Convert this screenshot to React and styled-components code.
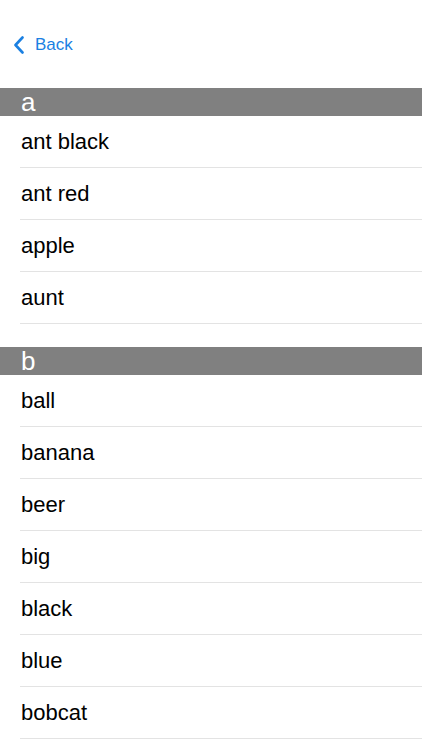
import styled, { createGlobalStyle } from 'styled-components';

const sections = [
  { letter: 'a', words: ['ant black', 'ant red', 'apple', 'aunt'] },
  { letter: 'b', words: ['ball', 'banana', 'beer', 'big', 'black', 'blue', 'bobcat'] },
];

const GlobalStyle = createGlobalStyle`
  body {
    margin: 0;
    background: #ffffff;
    font-family: "Liberation Sans", Arial, sans-serif;
  }
`;

const Screen = styled.div`
  width: 422px;
  background: #ffffff;
`;

const NavBar = styled.header`
  height: 88px;
  display: flex;
  align-items: center;
  padding: 1px 0 0 13px;
  box-sizing: border-box;
`;

const BackButton = styled.button`
  display: flex;
  align-items: center;
  gap: 10px;
  border: 0;
  background: none;
  padding: 0;
  color: #1b80e2;
  font-family: inherit;
  font-size: 17px;
  cursor: pointer;
`;

const Section = styled.section`
  margin-bottom: ${({ $last }) => ($last ? 0 : '23px')};
`;

const SectionHeader = styled.div`
  height: 28px;
  background: #808080;
  color: #ffffff;
  font-size: 26px;
  line-height: 28px;
  padding-left: 21px;
  overflow: hidden;
`;

const Row = styled.div`
  height: 51px;
  display: flex;
  align-items: center;
  margin-left: 20px;
  padding-left: 1px;
  border-bottom: 1px solid #e3e3e3;
  color: #000000;
  font-size: 22px;
`;

function Chevron() {
  return (
    <svg width="12" height="18" viewBox="0 0 12 18">
      <path d="M9.5 1.5 L2.5 9 L9.5 16.5" fill="none" stroke="currentColor" strokeWidth="2.6" strokeLinecap="round" strokeLinejoin="round" />
    </svg>
  );
}

export default function App() {
  return (
    <Screen>
      <GlobalStyle />
      <NavBar>
        <BackButton>
          <Chevron />
          Back
        </BackButton>
      </NavBar>

      {sections.map((section, index) => (
        <Section key={section.letter} $last={index === sections.length - 1}>
          <SectionHeader>{section.letter}</SectionHeader>
          {section.words.map((word) => (
            <Row key={word}>{word}</Row>
          ))}
        </Section>
      ))}
    </Screen>
  );
}
